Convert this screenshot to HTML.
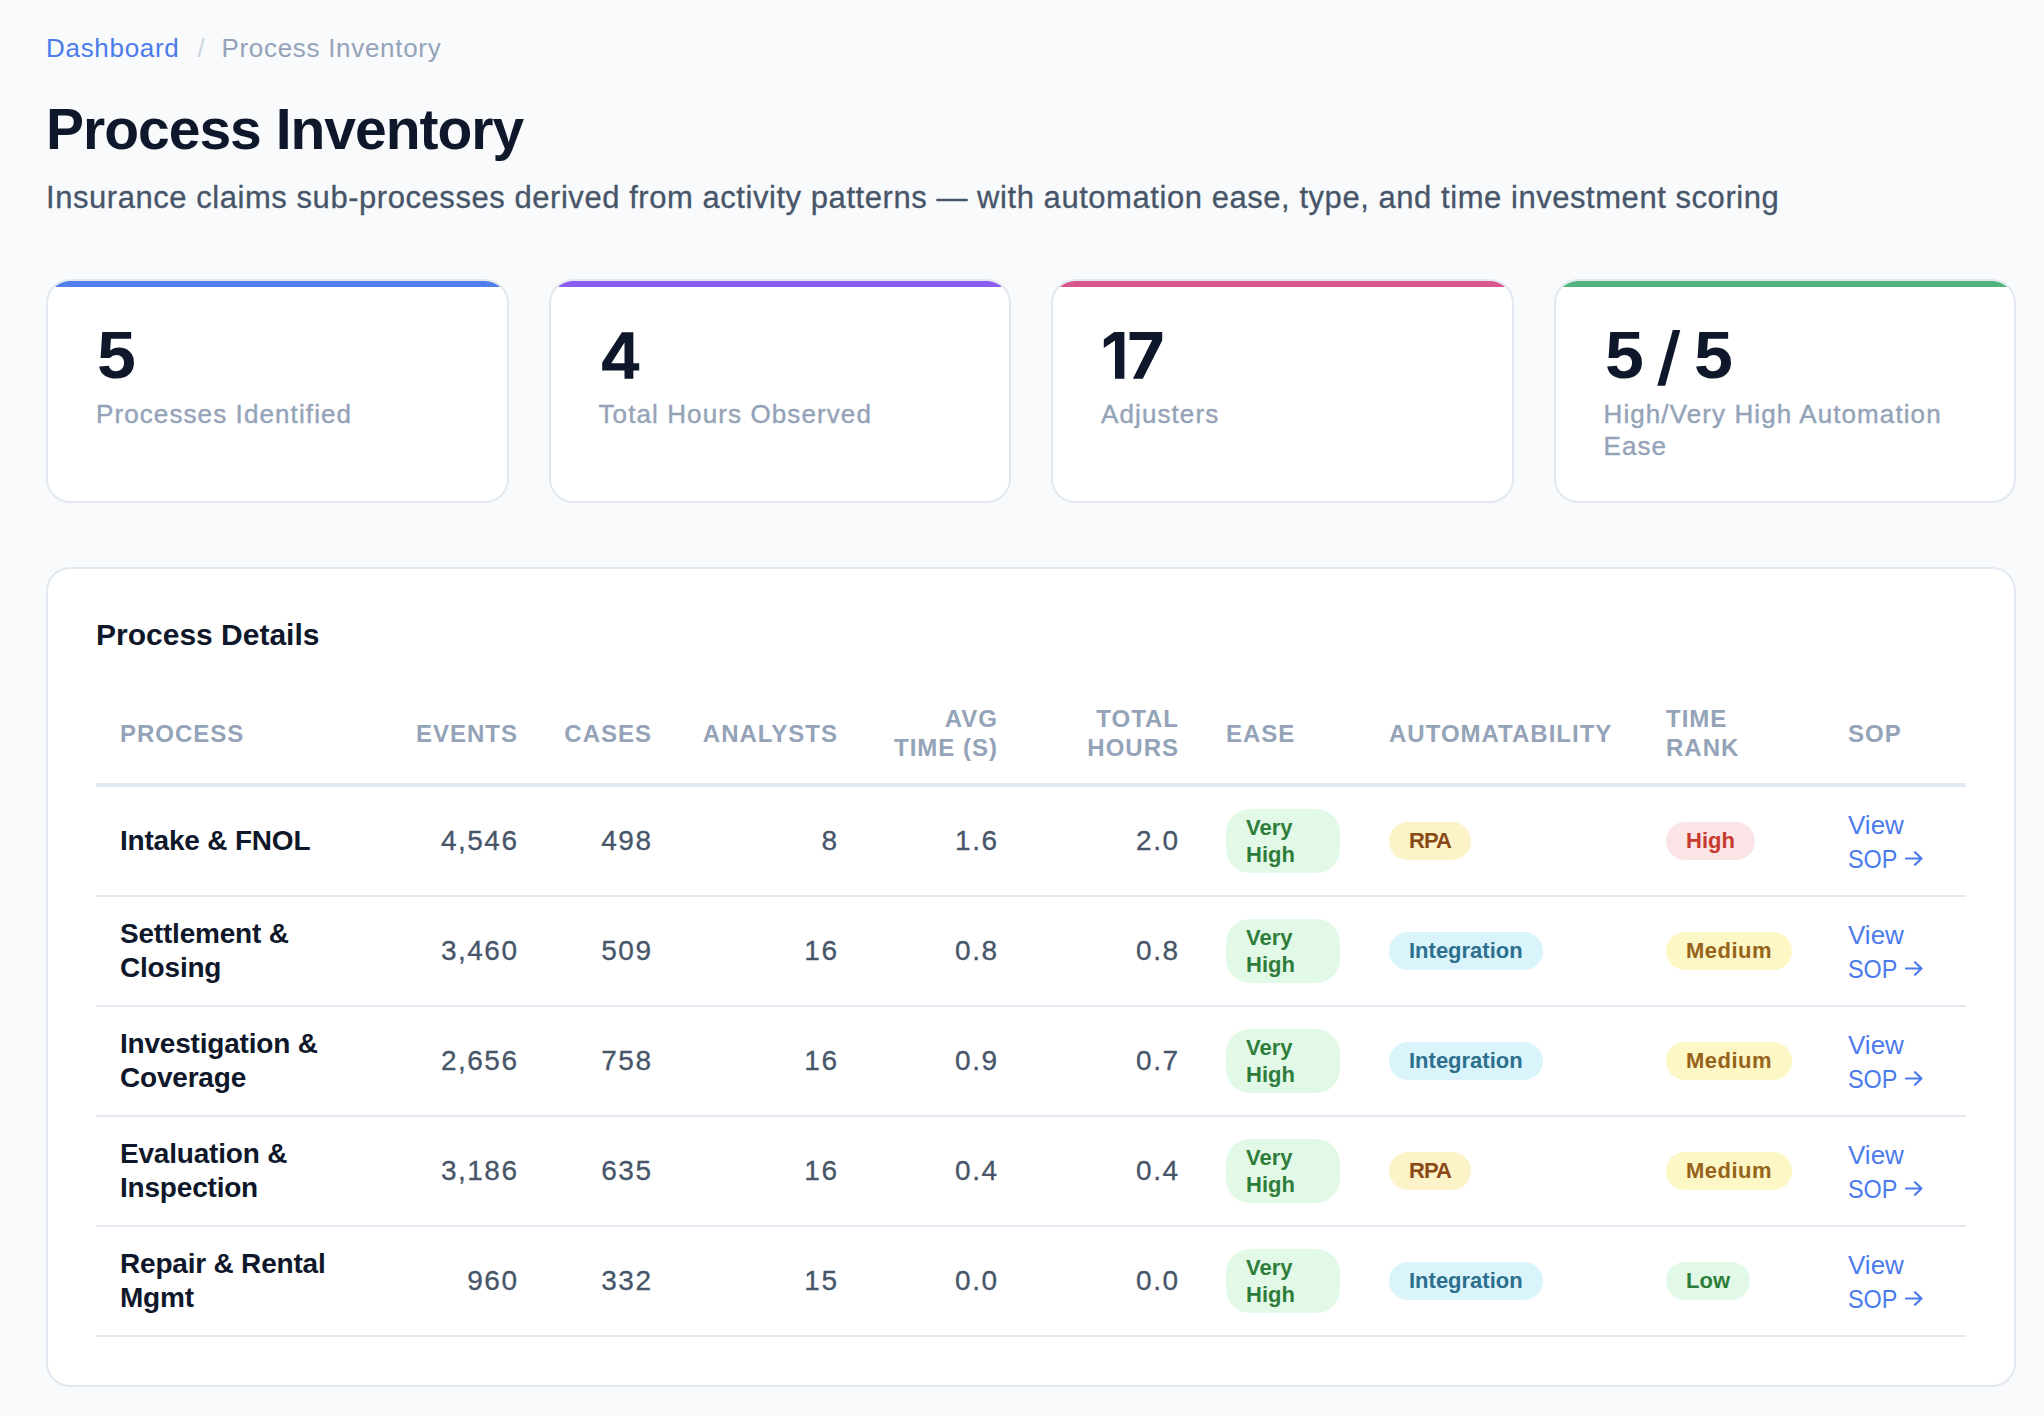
<!DOCTYPE html>
<html><head><meta charset="utf-8">
<style>
*{box-sizing:border-box;margin:0;padding:0}
@media (max-width:1100px){html{zoom:0.5}}
html,body{width:2044px;height:1416px;overflow:hidden;background:#f8fafc;font-family:"Liberation Sans",sans-serif}
.abs{position:absolute;white-space:nowrap}
#crumb{left:46px;top:32px;font-size:26px;line-height:32px;color:#94a3b8;letter-spacing:0.7px}
#crumb .lnk{color:#4b7bec}
#crumb .sep{color:#cbd5e1;margin:0 16px 0 18px}
#title{left:46px;top:97px;font-size:57px;line-height:64px;font-weight:bold;color:#0f172a;letter-spacing:-1px}
#sub{left:46px;top:178px;font-size:31px;line-height:40px;color:#475569;letter-spacing:0.55px;-webkit-text-stroke:0.3px #475569}
.card{position:absolute;top:279px;width:462.5px;height:224px;background:#fff;border:2px solid #e2e8f0;border-radius:24px;overflow:hidden}
.card .bar{position:absolute;left:0;right:0;top:0;height:6px}
.card .num{position:absolute;left:48px;top:39.4px;font-size:66px;line-height:72px;font-weight:bold;color:#0f172a;white-space:nowrap}
.card .lbl{position:absolute;left:48px;top:118px;font-size:26px;line-height:31.5px;color:#94a3b8;white-space:nowrap;letter-spacing:1.1px;-webkit-text-stroke:0.4px #94a3b8}
#tcard{position:absolute;left:46px;top:567px;width:1970px;height:820px;background:#fff;border:2px solid #e2e8f0;border-radius:24px}
#thead{position:absolute;left:48px;top:48px;font-size:30px;line-height:36px;font-weight:bold;color:#0f172a;white-space:nowrap}
table{position:absolute;left:48px;top:109px;width:1870px;border-collapse:collapse;table-layout:fixed}
th{font-size:24px;line-height:29px;font-weight:bold;color:#94a3b8;letter-spacing:1px;text-transform:uppercase;padding:5px 24px 0 24px;height:107px;vertical-align:middle;text-align:left;border-bottom:4px solid #e2e8f0}
td{height:110px;padding:0 24px;vertical-align:middle;border-bottom:2px solid #e2e8f0;font-size:28px;color:#475569}
tbody tr:first-child td{height:111px}
td.r{letter-spacing:1.5px;padding-right:22.5px;-webkit-text-stroke:0.3px #475569}
th.r{padding-left:0;padding-right:23px}
.r{text-align:right}
td.p{font-weight:bold;color:#0f172a;line-height:34px;letter-spacing:-0.2px}
.b{display:inline-block;font-size:22px;line-height:26px;font-weight:bold;padding:6px 20px;border-radius:24px;white-space:nowrap}
.vh{background:#e2f9e8;color:#2f7d3b;width:114px;white-space:normal;line-height:27px;padding-top:5px;padding-bottom:5px}
.lo{background:#e2f9e8;color:#2f7d3b}
.rpa{background:#fdf3c8;color:#8a4a16;letter-spacing:-1px}
.int{background:#d9f5fb;color:#2e6f8e}
.hi{background:#fbe4e5;color:#c63b2d}
.med{background:#fdf7c6;color:#96631a;letter-spacing:0.5px}
.sop{color:#4b7bec;font-size:26px;line-height:33.5px}
.sw{position:relative;top:1.5px}
.so{display:inline-block;transform:scaleX(0.9);transform-origin:0 0;margin-right:-5px}
.arr{display:inline-block;vertical-align:baseline;margin-left:0px;position:relative;top:-1.5px}
</style></head>
<body>
<div id="crumb" class="abs"><span class="lnk">Dashboard</span><span class="sep">/</span>Process Inventory</div>
<div id="title" class="abs">Process Inventory</div>
<div id="sub" class="abs">Insurance claims sub-processes derived from activity patterns — with automation ease, type, and time investment scoring</div>

<div class="card" style="left:46px"><div class="bar" style="background:#507eea"></div><div class="num" style="left:49px;top:38px;transform:scaleX(1.06);transform-origin:0 0">5</div><div class="lbl">Processes Identified</div></div>
<div class="card" style="left:548.5px"><div class="bar" style="background:#8b5cf0"></div><svg style="position:absolute;left:-2px;top:-2px" width="200" height="120" viewBox="0 0 200 120"><path fill="#0f172a" fill-rule="evenodd" d="M72.9 53.3H84.35V84.2H90.2V91.5H84.35V99.7H75.5V91.5H53.2V83.4Z M75.5 63.6V84.2H62.3Z"/></svg><div class="lbl">Total Hours Observed</div></div>
<div class="card" style="left:1051px"><div class="bar" style="background:#d9558f"></div><svg style="position:absolute;left:-2px;top:-2px" width="200" height="120" viewBox="0 0 200 120"><path fill="#0f172a" d="M63.1 53H73.4V99.7H64V61.6L52.8 68.9V60.4Z M78.6 53H111.2V61.5L91.8 99.7H81.9L101.2 61H78.6Z"/></svg><div class="lbl">Adjusters</div></div>
<div class="card" style="left:1553.5px"><div class="bar" style="background:#50b47c"></div><div class="num" style="left:49px;top:38px;transform:scaleX(1.06);transform-origin:0 0">5</div><div class="num" style="left:138.7px;top:38px;transform:scaleX(1.06);transform-origin:0 0">5</div><svg style="position:absolute;left:-2px;top:-2px" width="200" height="120" viewBox="0 0 200 120"><path fill="#0f172a" d="M118.8 51.1H126.3L111.2 106.75H103.3Z"/></svg><div class="lbl">High/Very High Automation<br>Ease</div></div>

<div id="tcard">
<div id="thead">Process Details</div>
<table>
<colgroup><col style="width:297px"><col style="width:148px"><col style="width:134px"><col style="width:186px"><col style="width:160px"><col style="width:181px"><col style="width:163px"><col style="width:277px"><col style="width:182px"><col style="width:142px"></colgroup>
<thead><tr>
<th>Process</th><th class="r">Events</th><th class="r">Cases</th><th class="r">Analysts</th><th class="r">Avg<br>Time (s)</th><th class="r">Total<br>Hours</th><th>Ease</th><th>Automatability</th><th>Time<br>Rank</th><th>SOP</th>
</tr></thead>
<tbody>
<tr><td class="p">Intake &amp; FNOL</td><td class="r">4,546</td><td class="r">498</td><td class="r">8</td><td class="r">1.6</td><td class="r">2.0</td><td><span class="b vh">Very<br>High</span></td><td><span class="b rpa">RPA</span></td><td><span class="b hi">High</span></td><td class="sop"><span class="sw">View<br><span class="so">SOP</span> <svg class="arr" width="18" height="15" viewBox="0 0 18 15"><path d="M1 7.5H16.5M10 1.2L16.5 7.5L10 13.8" fill="none" stroke="currentColor" stroke-width="2.2" stroke-linecap="round" stroke-linejoin="round"/></svg></span></td></tr>
<tr><td class="p">Settlement &amp;<br>Closing</td><td class="r">3,460</td><td class="r">509</td><td class="r">16</td><td class="r">0.8</td><td class="r">0.8</td><td><span class="b vh">Very<br>High</span></td><td><span class="b int">Integration</span></td><td><span class="b med">Medium</span></td><td class="sop"><span class="sw">View<br><span class="so">SOP</span> <svg class="arr" width="18" height="15" viewBox="0 0 18 15"><path d="M1 7.5H16.5M10 1.2L16.5 7.5L10 13.8" fill="none" stroke="currentColor" stroke-width="2.2" stroke-linecap="round" stroke-linejoin="round"/></svg></span></td></tr>
<tr><td class="p">Investigation &amp;<br>Coverage</td><td class="r">2,656</td><td class="r">758</td><td class="r">16</td><td class="r">0.9</td><td class="r">0.7</td><td><span class="b vh">Very<br>High</span></td><td><span class="b int">Integration</span></td><td><span class="b med">Medium</span></td><td class="sop"><span class="sw">View<br><span class="so">SOP</span> <svg class="arr" width="18" height="15" viewBox="0 0 18 15"><path d="M1 7.5H16.5M10 1.2L16.5 7.5L10 13.8" fill="none" stroke="currentColor" stroke-width="2.2" stroke-linecap="round" stroke-linejoin="round"/></svg></span></td></tr>
<tr><td class="p">Evaluation &amp;<br>Inspection</td><td class="r">3,186</td><td class="r">635</td><td class="r">16</td><td class="r">0.4</td><td class="r">0.4</td><td><span class="b vh">Very<br>High</span></td><td><span class="b rpa">RPA</span></td><td><span class="b med">Medium</span></td><td class="sop"><span class="sw">View<br><span class="so">SOP</span> <svg class="arr" width="18" height="15" viewBox="0 0 18 15"><path d="M1 7.5H16.5M10 1.2L16.5 7.5L10 13.8" fill="none" stroke="currentColor" stroke-width="2.2" stroke-linecap="round" stroke-linejoin="round"/></svg></span></td></tr>
<tr><td class="p">Repair &amp; Rental<br>Mgmt</td><td class="r">960</td><td class="r">332</td><td class="r">15</td><td class="r">0.0</td><td class="r">0.0</td><td><span class="b vh">Very<br>High</span></td><td><span class="b int">Integration</span></td><td><span class="b lo">Low</span></td><td class="sop"><span class="sw">View<br><span class="so">SOP</span> <svg class="arr" width="18" height="15" viewBox="0 0 18 15"><path d="M1 7.5H16.5M10 1.2L16.5 7.5L10 13.8" fill="none" stroke="currentColor" stroke-width="2.2" stroke-linecap="round" stroke-linejoin="round"/></svg></span></td></tr>
</tbody>
</table>
</div>
</body></html>
